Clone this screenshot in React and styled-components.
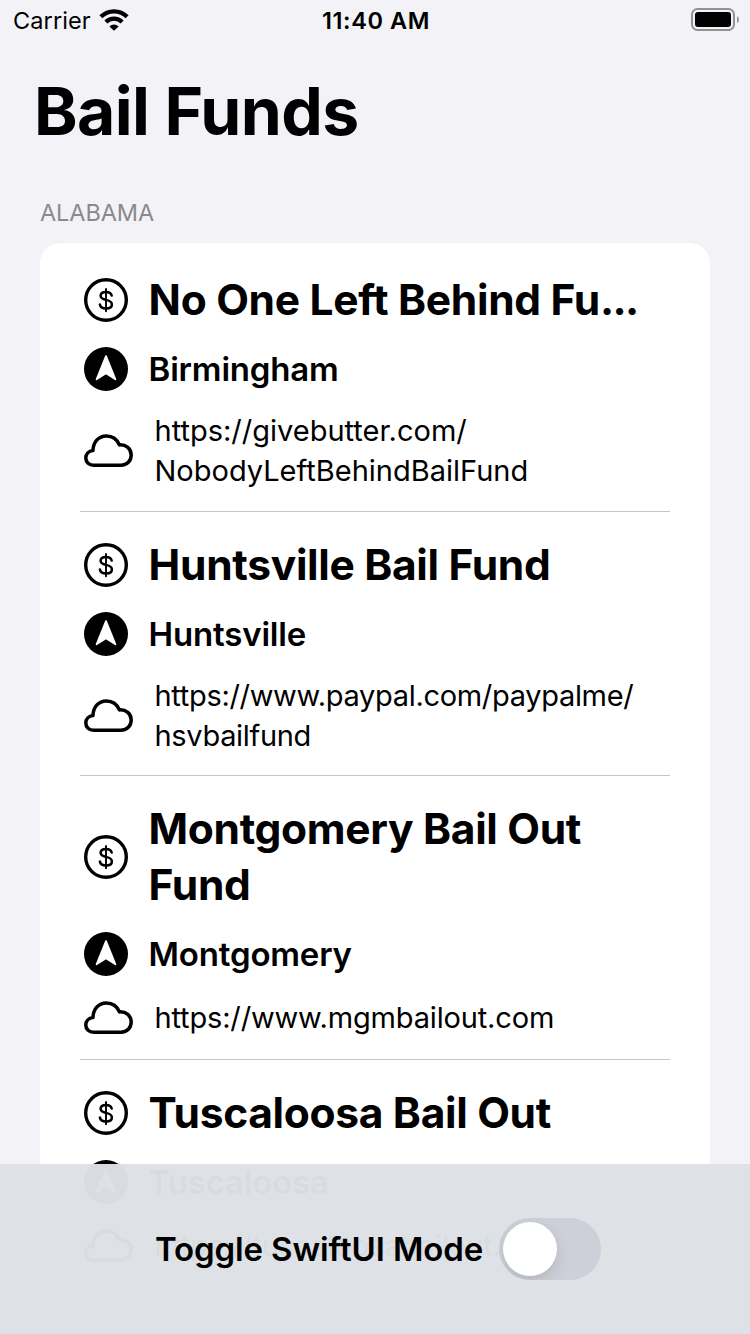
import React, { useState } from "react";
import styled, { createGlobalStyle } from "styled-components";

const GlobalStyle = createGlobalStyle`
  * { box-sizing: border-box; }
  html, body { margin: 0; padding: 0; background: #f2f2f7; }
  body {
    font-family: Inter, "Liberation Sans", sans-serif;
    font-feature-settings: "calt" 0, "liga" 0;
    color: #000;
    -webkit-font-smoothing: antialiased;
  }
`;

const Screen = styled.div`
  position: relative;
  width: 750px;
  height: 1334px;
  overflow: hidden;
  background: #f2f2f7;
`;

const StatusBar = styled.header`
  display: grid;
  grid-template-columns: 1fr auto 1fr;
  align-items: center;
  height: 40px;
  padding: 1px 11px 0 13px;
  font-size: 23.5px;
`;

const Carrier = styled.div`
  display: flex;
  align-items: center;
  gap: 8px;
  letter-spacing: 0.1px;
  svg { margin-bottom: 1px; }
`;

const Clock = styled.div`
  font-weight: 580;
  letter-spacing: 0.6px;
`;

const Power = styled.div`
  display: flex;
  justify-content: flex-end;
  padding-bottom: 2px;
`;

const LargeTitle = styled.h1`
  margin: 0;
  padding: 30px 0 0 34px;
  font-size: 66px;
  line-height: 82px;
  font-weight: 700;
  letter-spacing: -0.6px;
`;

const SectionTitle = styled.h2`
  margin: 0;
  padding: 46px 0 0 40px;
  height: 91px;
  font-size: 23.5px;
  line-height: 30px;
  font-weight: 400;
  letter-spacing: -0.1px;
  color: #8a8a8e;
`;

const Card = styled.ul`
  list-style: none;
  margin: 0 40px;
  padding: 4px 40px 0;
  background: #fff;
  border-radius: 20px;
`;

const FundItem = styled.li`
  display: flex;
  flex-direction: column;
  padding: 25px 0 19px 4px;
  border-bottom: 1px solid #c6c6c8;
  &:first-child { padding-bottom: 20px; }
`;

const Line = styled.div`
  display: flex;
  align-items: center;
  gap: 20px;
  min-height: 44px;
  svg { flex: none; }
  & + & { margin-top: 19px; }
  &:last-child { margin-top: 20px; }
`;

const FundName = styled.h3`
  margin: 0;
  padding-left: 0.6px;
  font-size: 42.5px;
  line-height: 56px;
  font-weight: 700;
  letter-spacing: -0.32px;
`;

const Ellipsis = styled.span`
  letter-spacing: -1.6px;
`;

const City = styled.div`
  padding-left: 0.6px;
  font-size: 33px;
  line-height: 40px;
  font-weight: 580;
  letter-spacing: -0.18px;
`;

const Link = styled.div`
  padding-left: 1.5px;
  font-size: 29px;
  line-height: 40px;
  white-space: pre-line;
  letter-spacing: ${(p) => p.$tracking ?? 0}px;
`;

const BottomPanel = styled.footer`
  position: absolute;
  left: 0;
  right: 0;
  bottom: 0;
  display: flex;
  align-items: center;
  justify-content: center;
  gap: 16px;
  height: 170px;
  padding-left: 6px;
  background: rgba(221, 225, 229, 0.975);
`;

const ToggleLabel = styled.span`
  font-size: 33px;
  font-weight: 560;
  letter-spacing: -0.12px;
  white-space: nowrap;
`;

const Track = styled.button`
  flex: none;
  display: flex;
  align-items: center;
  justify-content: ${(p) => (p.$on ? "flex-end" : "flex-start")};
  width: 102px;
  height: 62px;
  padding: 0 4px;
  border: 0;
  border-radius: 31px;
  overflow: hidden;
  background: ${(p) => (p.$on ? "#34c759" : "#cdd0d8")};
`;

const Knob = styled.span`
  width: 54px;
  height: 54px;
  border-radius: 50%;
  background: #fff;
  box-shadow: 0 6px 16px rgba(0, 0, 0, 0.11), 0 3px 2px rgba(0, 0, 0, 0.02);
`;

const WifiIcon = () => (
  <svg width="30" height="22" viewBox="0 0 30 22">
    <path d="M15 21.8 L10.4 17.4 A6.3 6.3 0 0 1 19.6 17.4 Z" />
    <path d="M6.9 13 A11.4 11.4 0 0 1 23.1 13" fill="none" stroke="#000" strokeWidth="4.2" />
    <path d="M1.9 7.8 A18.4 18.4 0 0 1 28.1 7.8" fill="none" stroke="#000" strokeWidth="4.2" />
  </svg>
);

const BatteryIcon = () => (
  <svg width="48" height="23" viewBox="0 0 48 23">
    <rect x="1" y="1" width="42" height="21" rx="5.5" fill="none" stroke="#929295" strokeWidth="2" />
    <rect x="4" y="4" width="36" height="15" rx="3" />
    <path d="M46 8 Q48 9 48 11.5 Q48 14 46 15 Z" fill="#929295" />
  </svg>
);

const DollarIcon = () => (
  <svg width="44" height="44" viewBox="0 0 44 44" fill="none" stroke="#000">
    <circle cx="22" cy="22" r="20.3" strokeWidth="3.4" />
    <path d="M22 11V33.2" strokeWidth="1.9" strokeLinecap="round" />
    <path d="M27.7 17.6C27.3 15.2 25.2 13.9 22 13.9C18.7 13.9 16.6 15.5 16.6 17.8C16.6 20.3 18.6 21.2 22 21.9C25.8 22.7 27.9 23.9 27.9 26.5C27.9 29 25.5 30.5 22 30.5C18.5 30.5 16.3 29 15.9 26.5" strokeWidth="2.5" strokeLinecap="round" />
  </svg>
);

const LocationIcon = () => (
  <svg width="44" height="44" viewBox="0 0 44 44">
    <circle cx="22" cy="22" r="22" />
    <path d="M22 9.2L31.4 32.3L22 26.2L12.6 32.3Z" fill="#fff" stroke="#fff" strokeWidth="1.8" strokeLinejoin="round" />
  </svg>
);

const CloudIcon = () => (
  <svg width="49" height="34" viewBox="0 0 49 34" fill="none" stroke="#000" strokeWidth="3.5" strokeLinejoin="round">
    <path d="M9.8 31.2C5 31.2 1.8 28.2 1.8 24C1.8 20 4.7 17 9 16.6C9 8.2 14.5 1.9 22.3 1.9C28.5 1.9 33.1 5.2 35.4 10.9C42 10.5 47.2 14.7 47.2 21C47.2 27 43 31.2 37 31.2Z" />
  </svg>
);

const funds = [
  { name: "No One Left Behind Fu", truncated: true, city: "Birmingham", link: "https://givebutter.com/\nNobodyLeftBehindBailFund" },
  { name: "Huntsville Bail Fund", city: "Huntsville", link: "https://www.paypal.com/paypalme/\nhsvbailfund", linkTracking: -0.32 },
  { name: "Montgomery Bail Out Fund", city: "Montgomery", link: "https://www.mgmbailout.com", linkTracking: -0.16 },
  { name: "Tuscaloosa Bail Out", city: "Tuscaloosa", link: "https://tuscaloosabailout.com" },
];

const Fund = ({ name, truncated, city, link, linkTracking }) => (
  <FundItem>
    <Line>
      <DollarIcon />
      <FundName>{name}{truncated && <Ellipsis>...</Ellipsis>}</FundName>
    </Line>
    <Line><LocationIcon /><City>{city}</City></Line>
    <Line><CloudIcon /><Link $tracking={linkTracking}>{link}</Link></Line>
  </FundItem>
);

export default function App() {
  const [on, setOn] = useState(false);
  return (
    <>
      <GlobalStyle />
      <Screen>
        <StatusBar>
          <Carrier>Carrier <WifiIcon /></Carrier>
          <Clock>11:40 AM</Clock>
          <Power><BatteryIcon /></Power>
        </StatusBar>
        <LargeTitle>Bail Funds</LargeTitle>
        <SectionTitle>ALABAMA</SectionTitle>
        <Card>
          {funds.map((f) => <Fund key={f.name} {...f} />)}
        </Card>
        <BottomPanel>
          <ToggleLabel>Toggle SwiftUI Mode</ToggleLabel>
          <Track $on={on} onClick={() => setOn(!on)} aria-label="Toggle SwiftUI Mode"><Knob /></Track>
        </BottomPanel>
      </Screen>
    </>
  );
}
